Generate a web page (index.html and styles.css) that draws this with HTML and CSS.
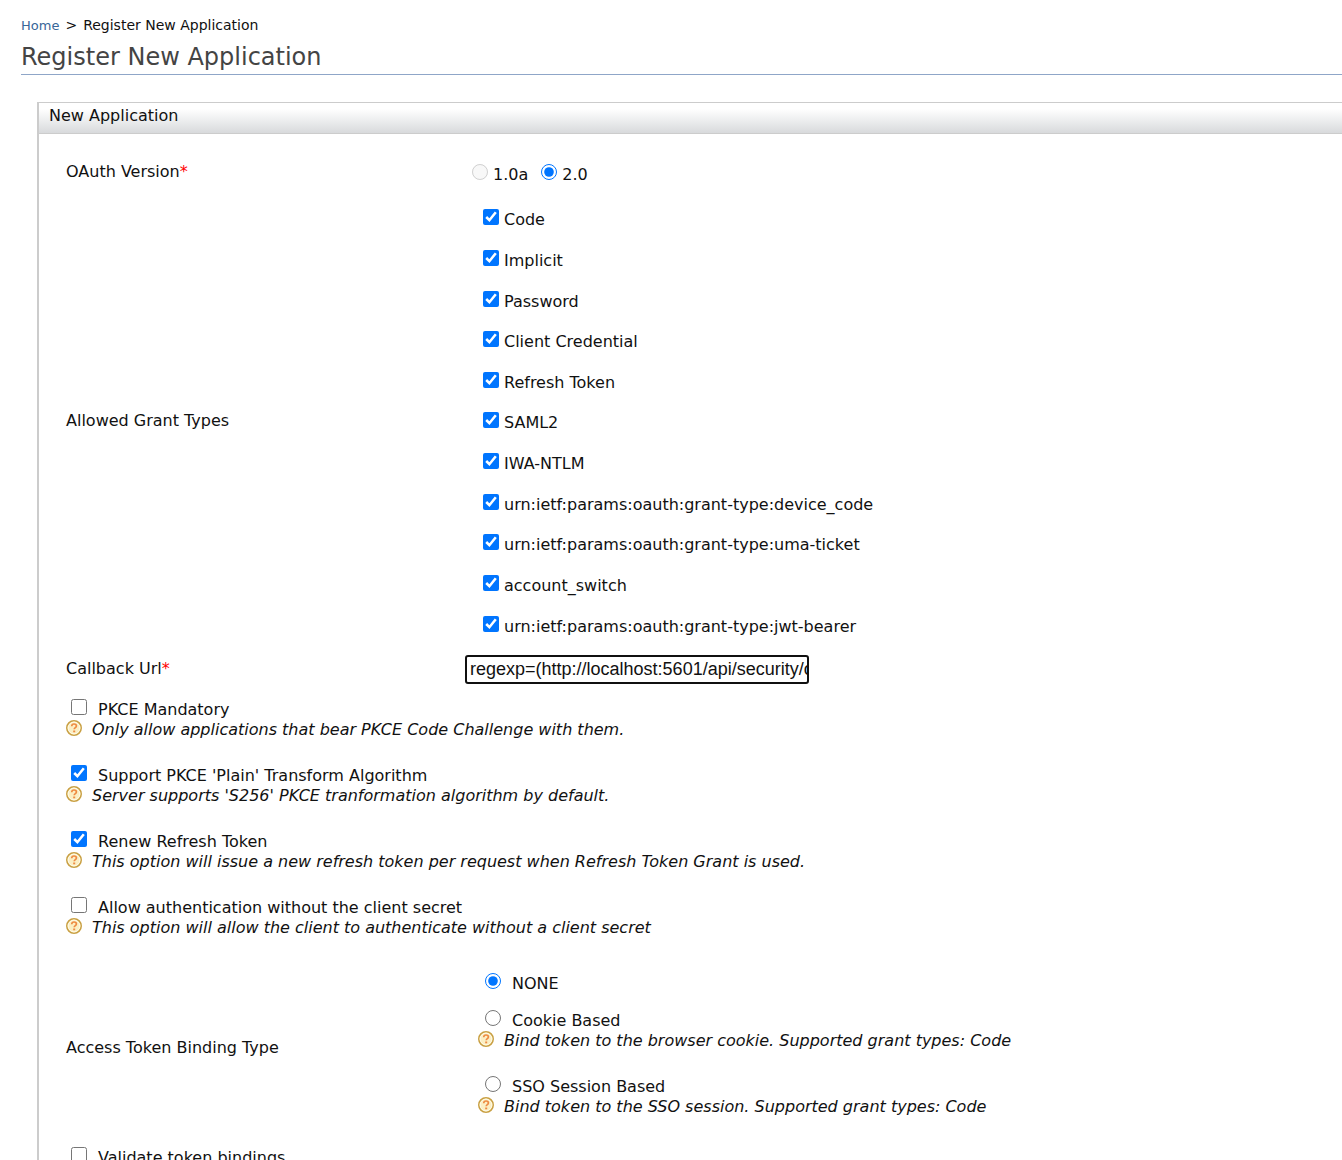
FILE: index.html
```
<!DOCTYPE html>
<html lang="en">
<head>
<meta charset="utf-8">
<title>Register New Application</title>
<link rel="stylesheet" href="styles.css">
</head>
<body>
<svg class="sprite" aria-hidden="true">
  <symbol id="help" viewBox="0 0 16 16">
    <circle cx="8" cy="8" r="7.2" fill="#fbefc4" stroke="#c9a044" stroke-width="1.6"/>
    <circle cx="8" cy="8" r="5.9" fill="none" stroke="#fffbe8" stroke-width="1"/>
    <path d="M5.7 6.2C5.8 4.7 6.7 4 8 4c1.4 0 2.4.8 2.4 2 0 1.6-2.2 1.7-2.2 3.3" fill="none" stroke="#ee8a42" stroke-width="1.7"/>
    <path d="M7.2 10.5h2v1.8h-2z" fill="#ee8a42"/>
  </symbol>
</svg>
<nav class="breadcrumb" aria-label="Breadcrumb"><a href="#">Home</a><span>&gt;</span><span>Register New Application</span></nav>
<main>
  <h1>Register New Application</h1>
  <form class="panel">
    <h2>New Application</h2>
    <div class="panel-body">
      <div class="row">
        <div class="name" id="version-name">OAuth Version<span class="required">*</span></div>
        <div class="versions" role="radiogroup" aria-labelledby="version-name">
          <label class="option"><input type="radio" name="version" disabled><span>1.0a</span></label>
          <label class="option"><input type="radio" name="version" checked><span>2.0</span></label>
        </div>
      </div>
      <div class="row">
        <div class="name" id="grants-name">Allowed Grant Types</div>
        <div class="grants" role="group" aria-labelledby="grants-name">
          <label class="option"><input type="checkbox" checked><span>Code</span></label>
          <label class="option"><input type="checkbox" checked><span>Implicit</span></label>
          <label class="option"><input type="checkbox" checked><span>Password</span></label>
          <label class="option"><input type="checkbox" checked><span>Client Credential</span></label>
          <label class="option"><input type="checkbox" checked><span>Refresh Token</span></label>
          <label class="option"><input type="checkbox" checked><span>SAML2</span></label>
          <label class="option"><input type="checkbox" checked><span>IWA-NTLM</span></label>
          <label class="option"><input type="checkbox" checked><span>urn:ietf:params:oauth:grant-type:device_code</span></label>
          <label class="option"><input type="checkbox" checked><span>urn:ietf:params:oauth:grant-type:uma-ticket</span></label>
          <label class="option"><input type="checkbox" checked><span>account_switch</span></label>
          <label class="option"><input type="checkbox" checked><span>urn:ietf:params:oauth:grant-type:jwt-bearer</span></label>
        </div>
      </div>
      <div class="row">
        <label class="name" for="callback">Callback Url<span class="required">*</span></label>
        <div><input class="url" id="callback" type="text" value="regexp=(http://localhost:5601/api/security/oidc/callback)"></div>
      </div>
      <div class="setting">
        <label class="option wide"><input type="checkbox"><span>PKCE Mandatory</span></label>
        <p class="hint"><svg><use href="#help"/></svg>Only allow applications that bear PKCE Code Challenge with them.</p>
      </div>
      <div class="setting">
        <label class="option wide"><input type="checkbox" checked><span>Support PKCE 'Plain' Transform Algorithm</span></label>
        <p class="hint"><svg><use href="#help"/></svg>Server supports 'S256' PKCE tranformation algorithm by default.</p>
      </div>
      <div class="setting">
        <label class="option wide"><input type="checkbox" checked><span>Renew Refresh Token</span></label>
        <p class="hint"><svg><use href="#help"/></svg>This option will issue a new refresh token per request when Refresh Token Grant is used.</p>
      </div>
      <div class="setting">
        <label class="option wide"><input type="checkbox"><span>Allow authentication without the client secret</span></label>
        <p class="hint"><svg><use href="#help"/></svg>This option will allow the client to authenticate without a client secret</p>
      </div>
      <div class="row binding-row">
        <div class="name" id="binding-name">Access Token Binding Type</div>
        <div class="bindings" role="radiogroup" aria-labelledby="binding-name">
          <label class="option wide none"><input type="radio" name="binding" checked><span>NONE</span></label>
          <div class="setting">
            <label class="option wide"><input type="radio" name="binding"><span>Cookie Based</span></label>
            <p class="hint"><svg><use href="#help"/></svg>Bind token to the browser cookie. Supported grant types: Code</p>
          </div>
          <div class="setting">
            <label class="option wide"><input type="radio" name="binding"><span>SSO Session Based</span></label>
            <p class="hint"><svg><use href="#help"/></svg>Bind token to the SSO session. Supported grant types: Code</p>
          </div>
        </div>
      </div>
      <div class="setting">
        <label class="option wide"><input type="checkbox"><span>Validate token bindings</span></label>
      </div>
    </div>
  </form>
</main>
</body>
</html>
```
FILE: styles.css
```
* { box-sizing: border-box; }

body {
  height: 100vh;
  margin: 0;
  padding: 15px 0 0 21px;
  overflow: hidden;
  background: #fff;
  color: #111;
  font: 16px/20px Verdana, "DejaVu Sans", sans-serif;
}

.sprite { display: none; }

.breadcrumb {
  display: flex;
  align-items: baseline;
  gap: 6px;
  font-size: 14px;
}

.breadcrumb a {
  color: #386698;
  font-size: 13px;
  text-decoration: none;
}

h1 {
  margin: 0;
  padding: 6px 0 2px;
  border-bottom: 1px solid #8fa6c8;
  color: #444;
  font-size: 24px;
  font-weight: 400;
  line-height: 30px;
}

.panel {
  margin: 27px 0 0 16px;
  border-left: 2px solid #ccc;
}

h2 {
  height: 32px;
  margin: 0;
  padding: 3px 10px;
  border: solid #ccc;
  border-width: 1px 0;
  background: linear-gradient(#fff 20%, #d8dadc);
  font-size: 16px;
  font-weight: 400;
}

.panel-body { padding: 13px 0 0 27px; }

.row {
  display: grid;
  grid-template-columns: 399px 1fr;
  align-items: center;
  min-height: 50px;
}

.required { color: #f00; }

.option {
  display: flex;
  align-items: center;
  gap: 5px;
}

.option span { padding-top: 6px; }

.option input {
  flex: none;
  width: 16px;
  height: 16px;
  margin: 0;
  accent-color: #0075ff;
}

.wide {
  gap: 11px;
  padding-left: 5px;
}

.versions {
  display: flex;
  gap: 13px;
  padding-left: 7px;
}

.grants {
  display: grid;
  grid-auto-rows: 1fr;
  min-height: 447px;
  padding-left: 18px;
}

.url {
  display: block;
  width: 344px;
  height: 29px;
  padding: 0 0 0 3px;
  border: 2px solid #101010;
  border-radius: 3px;
  outline: none;
  color: #111;
  font: 18px "Liberation Sans", Arial, sans-serif;
}

.setting { margin-bottom: 20px; }

.hint {
  display: flex;
  align-items: flex-start;
  gap: 10px;
  margin: 0;
  font-style: italic;
}

.hint svg {
  flex: none;
  width: 16px;
  height: 16px;
}

.binding-row { margin: 30px 0 15px; }

.bindings { padding: 0 0 10px 13px; }

.bindings .option { padding-left: 7px; }

.bindings .none { margin-bottom: 11px; }

.bindings .setting:last-child { margin-bottom: 0; }
```
